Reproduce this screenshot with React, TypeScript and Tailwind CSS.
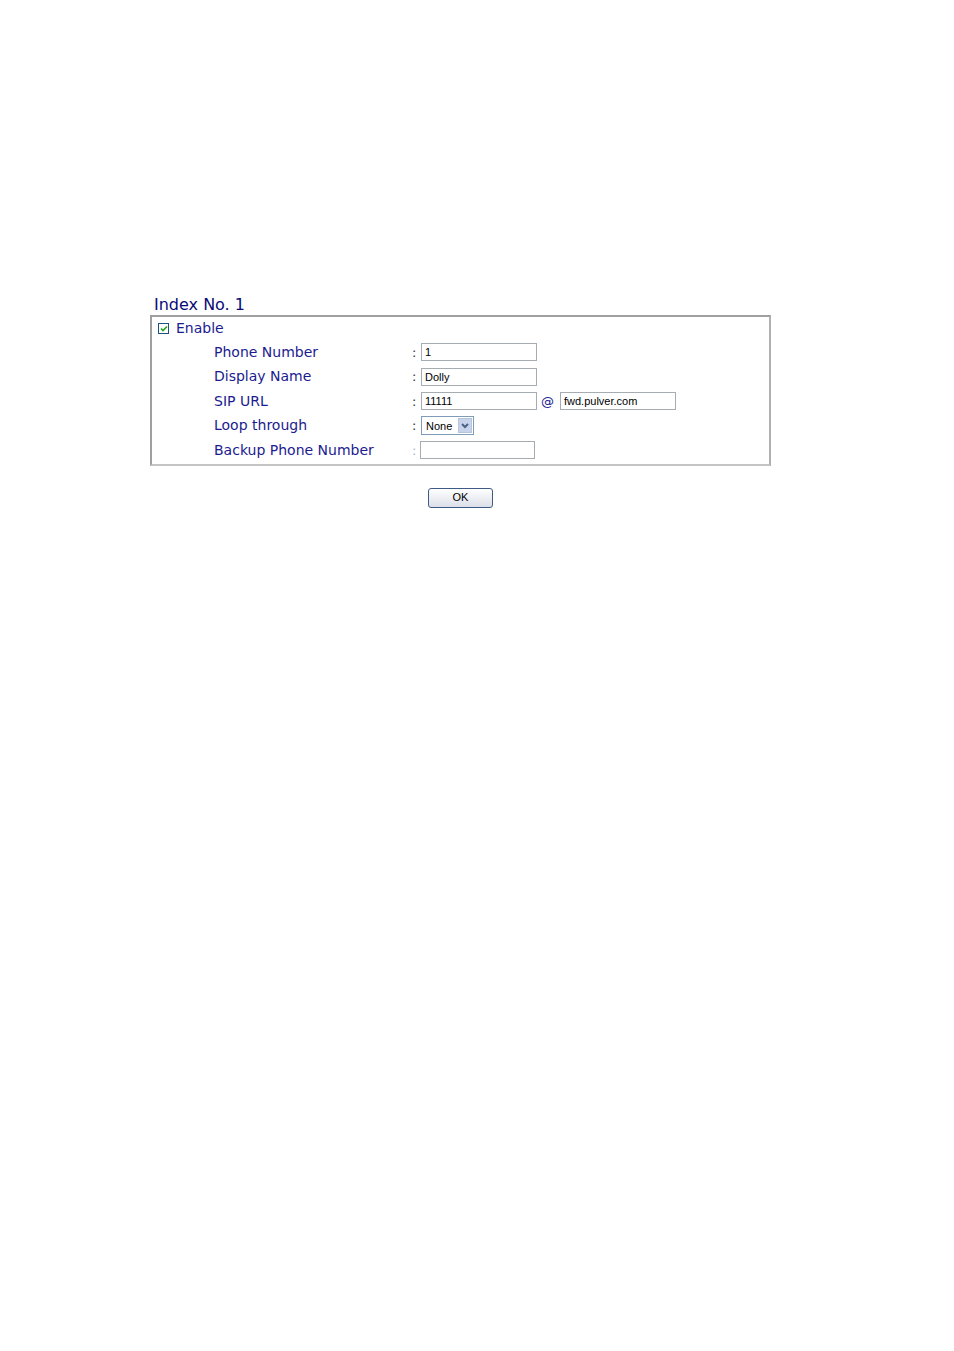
import type { ReactNode } from 'react';

const labelFont = { fontFamily: '"DejaVu Sans", Verdana, sans-serif' };

const Field = ({ value, width = 'w-[116px]' }: { value?: string; width?: string }) => (
    <div
        className={`${width} h-[18px] border border-[#a5acb2] bg-white px-[3px] text-[11px] leading-[16px] text-black font-['Liberation_Sans',Arial,sans-serif]`}
    >
        {value}
    </div>
);

const Row = ({ label, faint, children }: { label: string; faint?: boolean; children: ReactNode }) => (
    <div className="flex h-[24.5px] items-center">
        <div className="w-[260px] shrink-0 whitespace-nowrap pl-[62px] text-[14px] text-[#1b1b8f]" style={labelFont}>{label}</div>
        <div className={`w-[9px] shrink-0 text-[13px] ${faint ? 'text-[#a8b4d8]' : 'text-[#333]'}`} style={labelFont}>:</div>
        <div className="flex items-center">{children}</div>
    </div>
);

export default function App() {
    return (
        <div className="min-h-[1351px] w-full bg-white">
            <div className="ml-[150px] w-[621px] pt-[295px]">
                <div className="pl-[4px] text-[16px] leading-[20px] text-[#0a0a78]" style={labelFont}>Index No. 1</div>
                <div className="border-2 border-t-[#a0a0a0] border-l-[#a0a0a0] border-r-[#b0b0b0] border-b-[#c4c4c4] pb-[1px]">
                    <div className="flex h-[23px] items-center pl-[6px]">
                        <div className="flex h-[11px] w-[11px] items-center justify-center border border-[#1c5180] bg-white">
                            <svg width="8" height="7" viewBox="0 0 8 7">
                                <path d="M1 3.5 L3 5.5 L7 1.5" stroke="#21a121" strokeWidth="1.6" fill="none" />
                            </svg>
                        </div>
                        <span className="ml-[7px] text-[14px] text-[#1b1b8f]" style={labelFont}>Enable</span>
                    </div>
                    <Row label="Phone Number"><Field value="1" /></Row>
                    <Row label="Display Name"><Field value="Dolly" /></Row>
                    <Row label="SIP URL">
                        <Field value="11111" />
                        <span className="ml-[4px] mr-[6px] text-[13px] text-[#1b1b8f]" style={labelFont}>@</span>
                        <Field value="fwd.pulver.com" />
                    </Row>
                    <Row label="Loop through">
                        <div className="flex h-[19px] w-[53px] items-center border border-[#7f9db9] bg-white">
                            <span className="flex-1 pl-[4px] text-[11px] text-black font-['Liberation_Sans',Arial,sans-serif]">None</span>
                            <div className="mr-[1px] flex h-[15px] w-[14px] items-center justify-center border border-[#b6c5dc] bg-[#c6d3ea]">
                                <svg width="8" height="6" viewBox="0 0 8 6">
                                    <path d="M1 1 L4 4 L7 1" stroke="#4d6185" strokeWidth="2" fill="none" />
                                </svg>
                            </div>
                        </div>
                    </Row>
                    <Row label="Backup Phone Number" faint>
                        <div className="-ml-[1px]"><Field width="w-[115px]" /></div>
                    </Row>
                </div>
                <div className="flex justify-center pt-[22px]">
                    <button className="h-[20px] w-[65px] rounded-[3px] border border-[#3e5a86] bg-gradient-to-b from-white to-[#dcdfe8] text-[11px] text-black font-['Liberation_Sans',Arial,sans-serif]">
                        OK
                    </button>
                </div>
            </div>
        </div>
    );
}
